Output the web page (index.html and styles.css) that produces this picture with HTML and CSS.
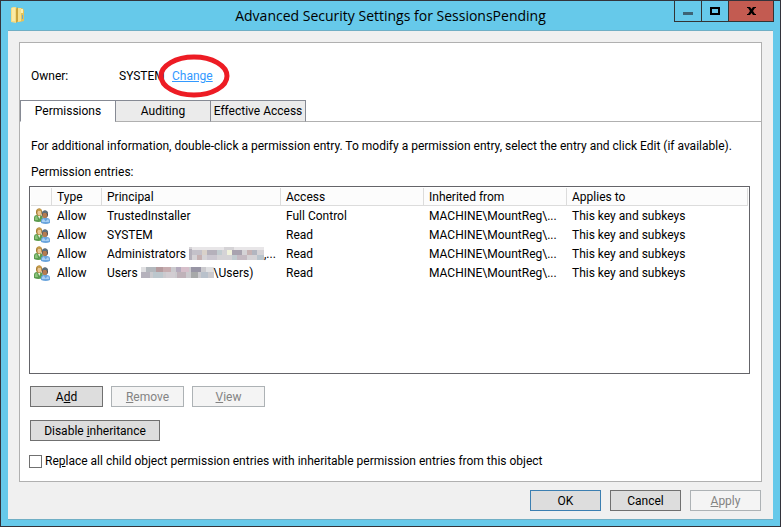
FILE: index.html
```html
<!DOCTYPE html>
<html lang="en">
<head>
<meta charset="utf-8">
<title>Advanced Security Settings for SessionsPending</title>
<link rel="stylesheet" href="styles.css">
</head>
<body>
<svg class="sprites" aria-hidden="true">
  <symbol id="users" viewBox="0 0 16 16">
    <path d="M0 13V10Q0 7 3 7H7Q9 8 9 11V13Q4 15 0 13Z" fill="#5c9c50"/>
    <path d="M1 12V10Q1 8 3 8L4 12Z" fill="#8cc47a"/>
    <path d="M3.500 7H6.500L5.500 11Z" fill="#eef2e0"/>
    <ellipse cx="5" cy="4.200" rx="3" ry="3.700" fill="#a67c32"/>
    <ellipse cx="5.300" cy="4.800" rx="2" ry="2.700" fill="#eac795"/>
    <path d="M2.500 3Q3 0 6 .5Q8 1 7.500 3Q5 3 4 2.500Z" fill="#c59b48"/>
    <path d="M7 15V12.500Q7 10 10 10H13Q16 10 16 13V15Q12 17 7 15Z" fill="#6ba5dd"/>
    <path d="M8 14V12.500Q8 11 10 11L11.500 13.500L14 11Q15 11.500 15 14Z" fill="#a9d0f3"/>
    <ellipse cx="11" cy="6.200" rx="3" ry="3.800" fill="#4f4c49"/>
    <ellipse cx="10.800" cy="7.300" rx="2.200" ry="2.800" fill="#b57c50"/>
    <path d="M8 5Q8 2.500 11 2.500Q14 2.500 14 6L12.500 5Q10 5 8 5Z" fill="#5d6f7b"/>
  </symbol>
</svg>
<div class="window">
  <header class="titlebar">
    <svg class="folder" viewBox="0 0 14 17" aria-hidden="true">
      <path d="M5 1H11L13 3V14L9 15H5Z" fill="#e3c35c"/>
      <path d="M0 1L2 0H5V16L0 15Z" fill="#f3dc85"/>
      <path d="M1 1H4V14L1 14Z" fill="#fae9a4"/>
      <path d="M5 2L7 0V14L5 16Z" fill="#caa43c"/>
      <path d="M7 1H10V14L7 15Z" fill="#f5df8d"/>
      <path d="M10 2H12V6H10Z" fill="#fff1ad"/>
      <path d="M11 8H12V12H11Z" fill="#72a9c6"/>
    </svg>
    <h1 class="title">Advanced Security Settings for SessionsPending</h1>
    <div class="controls">
      <button class="control" type="button" aria-label="Minimize"><svg width="10" height="10" viewBox="0 0 10 10"><path d="M0 6H10V9H0Z" fill="#3d6375"/></svg></button>
      <button class="control" type="button" aria-label="Maximize"><svg width="10" height="8" viewBox="0 0 10 8"><path d="M1 1H9V7H1Z" fill="none" stroke="#000" stroke-width="2"/></svg></button>
      <button class="control close" type="button" aria-label="Close"><svg width="9" height="8" viewBox="0 0 9 8"><path d="M0 0H3L4.500 2L6 0H9V1H8L6 4L8 7H9V8H6L4.500 6L3 8H0V7H1L3 4L1 1H0Z" fill="#000"/></svg></button>
    </div>
  </header>
  <main class="body">
    <section class="panel">
      <div class="owner">
        <span class="owner-label">Owner:</span>
        <span class="owner-name">SYSTEM</span>
        <span class="owner-change"><a href="#">Change</a>
          <svg class="ring" viewBox="0 0 72 44" aria-hidden="true"><ellipse cx="36" cy="22" rx="33" ry="19" fill="none" stroke="#ed1c24" stroke-width="5"/></svg>
        </span>
      </div>
      <div class="tabs" role="tablist">
        <button class="tab active" type="button" role="tab" aria-selected="true">Permissions</button>
        <button class="tab" type="button" role="tab" aria-selected="false">Auditing</button>
        <button class="tab" type="button" role="tab" aria-selected="false">Effective Access</button>
      </div>
      <div class="page">
        <p class="info">For additional information, double-click a permission entry. To modify a permission entry, select the entry and click Edit (if available).</p>
        <p class="caption" id="entries">Permission entries:</p>
        <div class="list">
          <table aria-labelledby="entries">
            <colgroup><col class="c-icon"><col class="c-type"><col class="c-principal"><col class="c-mid"><col class="c-mid"><col></colgroup>
            <thead><tr><th></th><th>Type</th><th>Principal</th><th>Access</th><th>Inherited from</th><th>Applies to</th></tr></thead>
            <tbody>
              <tr><td><svg class="users"><use href="#users"/></svg></td><td>Allow</td><td>TrustedInstaller</td><td>Full Control</td><td>MACHINE\MountReg\...</td><td>This key and subkeys</td></tr>
              <tr><td><svg class="users"><use href="#users"/></svg></td><td>Allow</td><td>SYSTEM</td><td>Read</td><td>MACHINE\MountReg\...</td><td>This key and subkeys</td></tr>
              <tr><td><svg class="users"><use href="#users"/></svg></td><td>Allow</td><td><span class="principal">Administrators <svg class="mosaic wide" viewBox="0 0 75 13" shape-rendering="crispEdges" aria-hidden="true">
                <path d="M0 0H75V13H0Z" fill="#d5d3d6"/>
                <path d="M0 2H3V13H0ZM18 3H28V8H18Z" fill="#b5b1bb"/><path d="M3 3H13V8H3Z" fill="#c4c1c9"/><path d="M8 8H13V13H8ZM58 3H63V8H58Z" fill="#c6b2b3"/><path d="M13 3H18V8H13Z" fill="#d9d1c9"/><path d="M28 3H33V8H28ZM43 8H48V13H43Z" fill="#c2ccd0"/><path d="M38 3H43V8H38Z" fill="#f1f2dc"/><path d="M43 3H53V8H43Z" fill="#a9a3af"/><path d="M18 8H28V13H18Z" fill="#cbc7d0"/><path d="M48 8H58V13H48Z" fill="#c5bac2"/><path d="M63 3H68V8H63Z" fill="#b2b6c0"/><path d="M68 8H75V13H68Z" fill="#bac5cd"/><path d="M3 0H35V3H3ZM45 0H75V3H45Z" fill="#e8e6e8"/>
              </svg>,...</span></td><td>Read</td><td>MACHINE\MountReg\...</td><td>This key and subkeys</td></tr>
              <tr><td><svg class="users"><use href="#users"/></svg></td><td>Allow</td><td><span class="principal">Users <svg class="mosaic" viewBox="0 0 73 11" shape-rendering="crispEdges" aria-hidden="true">
                <path d="M0 0H73V11H0Z" fill="#cbcace"/>
                <path d="M0 0H5V5H0ZM65 0H73V5H65Z" fill="#e0e0e2"/><path d="M5 0H15V5H5Z" fill="#b3b8bd"/><path d="M15 0H22V5H15Z" fill="#b59b9e"/><path d="M22 0H30V5H22Z" fill="#c7adb0"/><path d="M35 0H40V5H35Z" fill="#b4aabc"/><path d="M40 0H48V5H40Z" fill="#d6bfca"/><path d="M50 0H60V5H50Z" fill="#9895a5"/><path d="M0 5H9V11H0Z" fill="#b5b2bc"/><path d="M12 5H22V11H12Z" fill="#bcc7cd"/><path d="M25 5H34V11H25Z" fill="#d2cdd2"/><path d="M36 5H45V11H36Z" fill="#bfb2b9"/><path d="M50 5H57V11H50Z" fill="#a7a9a9"/><path d="M60 5H67V11H60Z" fill="#b9c1cb"/>
              </svg>\Users)</span></td><td>Read</td><td>MACHINE\MountReg\...</td><td>This key and subkeys</td></tr>
            </tbody>
          </table>
        </div>
        <div class="row">
          <button class="btn" type="button">A<u>d</u>d</button>
          <button class="btn" type="button" disabled><u>R</u>emove</button>
          <button class="btn" type="button" disabled><u>V</u>iew</button>
        </div>
        <div class="row second">
          <button class="btn long" type="button">Disable <u>i</u>nheritance</button>
        </div>
        <div class="replace">
          <input type="checkbox" id="replace">
          <label for="replace">Re<u>p</u>lace all child object permission entries with inheritable permission entries from this object</label>
        </div>
      </div>
    </section>
    <footer class="footer">
      <button class="btn default" type="button">OK</button>
      <button class="btn" type="button">Cancel</button>
      <button class="btn" type="button" disabled><u>A</u>pply</button>
    </footer>
  </main>
</div>
</body>
</html>
```
FILE: styles.css
```css
* { box-sizing: border-box; }
body {
  margin: 0;
  font: 12px/16px Roboto, "Open Sans", sans-serif;
  color: #000;
}
button { font: inherit; color: inherit; }
p, h1 { margin: 0; }
.sprites { position: absolute; width: 0; height: 0; }

.window {
  display: flex;
  flex-direction: column;
  min-height: 100vh;
  padding: 0 7px 6px;
  border: 1px solid #33333b;
  background: #66c9ea;
}
.titlebar {
  display: grid;
  grid-template-columns: 101px 1fr 101px;
  height: 29px;
}
.folder { width: 14px; height: 17px; margin: 6px 0 0 3px; }
.title {
  font-family: "Open Sans", "Noto Sans", sans-serif;
  font-size: 14px;
  font-weight: 400;
  line-height: 29px;
  text-align: center;
  white-space: nowrap;
}
.controls {
  display: flex;
  height: 21px;
  margin: 0 -1px 0 2px;
  border: solid #333;
  border-width: 0 1px 1px;
}
.control {
  display: flex;
  flex: 0 0 27px;
  align-items: center;
  justify-content: center;
  padding: 0;
  border: 0;
  border-right: 1px solid #333;
  background: none;
}
.control.close { flex: 1; border: 0; background: #c35b51; }

.body {
  display: flex;
  flex: 1;
  flex-direction: column;
  padding: 11px 11px 8px;
  border-top: 1px solid #70afc5;
  border-bottom: 1px solid #70afc5;
  background: #f0f0f0;
}
.panel {
  display: flex;
  flex: 1;
  flex-direction: column;
  border: 1px solid #b0b0b0;
  background: #fff;
}
.owner { display: flex; padding: 25px 11px 16px; }
.owner-label { width: 88px; }
.owner-name { width: 53px; }
.owner-change { position: relative; }
.owner-change a { color: #3399ff; }
.ring { position: absolute; top: -14px; left: -14px; width: 72px; height: 44px; pointer-events: none; }

.tabs {
  display: flex;
  height: 22px;
  border-bottom: 1px solid #b0b0b0;
}
.tab {
  width: 96px;
  height: 22px;
  margin-right: -1px;
  padding: 0;
  border: 1px solid #868a94;
  border-bottom-color: #b0b0b0;
  background: #ebebeb;
  white-space: nowrap;
}
.tab.active { border-bottom-color: #fff; background: #fff; }

.page {
  display: flex;
  flex: 1;
  flex-direction: column;
  padding: 16px 11px 12px 9px;
}
.info, .caption { padding-left: 2px; white-space: nowrap; }
.caption { margin: 10px 0 6px; }
.list { flex: 1; border: 1px solid #646469; padding: 1px; }
table { width: 100%; table-layout: fixed; border-collapse: separate; border-spacing: 0; }
.c-icon { width: 21px; }
.c-type { width: 50px; }
.c-principal { width: 179px; }
.c-mid { width: 143px; }
th {
  height: 18px;
  padding: 0 5px;
  border-right: 1px solid #dcdcdc;
  border-bottom: 1px solid #dcdcdc;
  background: #fcfcfc;
  font-weight: 400;
  text-align: left;
}
td { height: 19px; padding: 0 5px; white-space: nowrap; }
td:first-child { padding: 0 0 0 3px; }
.users { display: block; width: 16px; height: 16px; }
.principal { display: flex; gap: 3px; align-items: center; }
.mosaic { flex: none; width: 73px; height: 11px; margin-right: -3px; }
.mosaic.wide { width: 75px; height: 13px; }

.btn {
  width: 73px;
  height: 21px;
  padding: 0;
  border: 1px solid #707070;
  background: #ddd;
  line-height: 18px;
}
.btn:disabled { border-color: #adb2b5; background: #f4f4f4; color: #838383; }
.btn.default { border-color: #3c7fb1; }
.btn.long { width: 130px; }
.row { display: flex; gap: 8px; margin-top: 12px; padding-left: 1px; }
.row.second { margin-top: 13px; }
.replace { display: flex; gap: 3px; align-items: center; margin-top: 12px; }
.replace input {
  appearance: none;
  width: 13px;
  height: 13px;
  margin: 0;
  border: 1px solid #707070;
  background: #fff;
}
.footer { display: flex; gap: 9px; justify-content: flex-end; margin-top: 8px; padding-right: 1px; }
.footer .btn { width: 71px; }
```
